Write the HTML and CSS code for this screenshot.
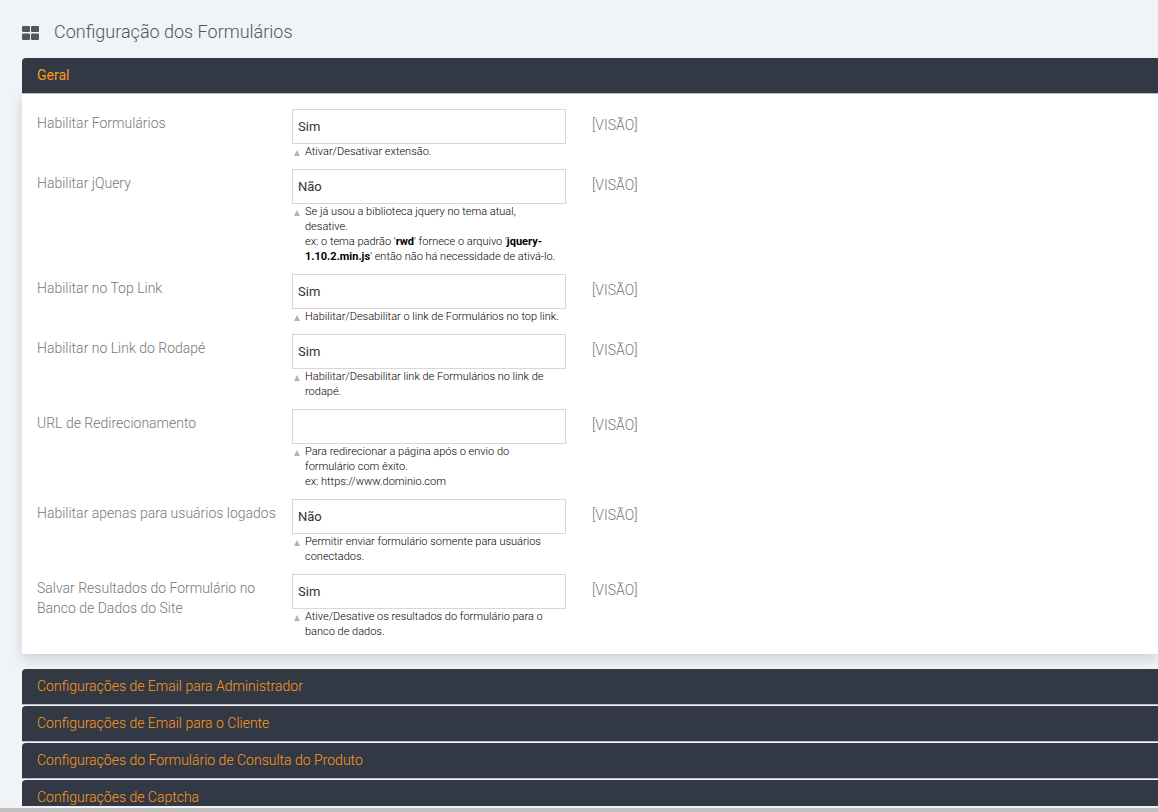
FILE: index.html
```
<!DOCTYPE html>
<html lang="pt-BR">
<head>
    <meta charset="UTF-8">
    <meta name="viewport" content="width=device-width, initial-scale=1.0">
    <title>Configuração dos Formulários</title>
    <link rel="stylesheet" href="styles.css">
</head>
<body>
    <main class="content">
        <header class="content-header">
            <svg class="header-icon" width="18" height="16" viewBox="0 0 18 16" aria-hidden="true">
                <rect x="0" y="2" width="8" height="6" rx="1"/>
                <rect x="9" y="2" width="8" height="6" rx="1"/>
                <rect x="0" y="9.5" width="8" height="6.5" rx="1"/>
                <rect x="9" y="9.5" width="8" height="6.5" rx="1"/>
            </svg>
            <h1>Configuração dos Formulários</h1>
        </header>

        <section class="section open">
            <h2><a class="section-head" href="#geral">Geral</a></h2>
            <form class="section-body" id="geral">
                <div class="row">
                    <label for="enabled">Habilitar Formulários</label>
                    <div class="value">
                        <select id="enabled">
                            <option selected>Sim</option>
                            <option>Não</option>
                        </select>
                        <p class="note">Ativar/Desativar extensão.</p>
                    </div>
                    <span class="scope">[VISÃO]</span>
                </div>
                <div class="row">
                    <label for="jquery">Habilitar jQuery</label>
                    <div class="value">
                        <select id="jquery">
                            <option>Sim</option>
                            <option selected>Não</option>
                        </select>
                        <p class="note">Se já usou a biblioteca jquery no tema atual, desative.<br>ex: o tema padrão '<strong>rwd</strong>' fornece o arquivo '<strong>jquery-1.10.2.min.js</strong>' então não há necessidade de ativá-lo.</p>
                    </div>
                    <span class="scope">[VISÃO]</span>
                </div>
                <div class="row">
                    <label for="toplink">Habilitar no Top Link</label>
                    <div class="value">
                        <select id="toplink">
                            <option selected>Sim</option>
                            <option>Não</option>
                        </select>
                        <p class="note">Habilitar/Desabilitar o link de Formulários no top link.</p>
                    </div>
                    <span class="scope">[VISÃO]</span>
                </div>
                <div class="row">
                    <label for="footerlink">Habilitar no Link do Rodapé</label>
                    <div class="value">
                        <select id="footerlink">
                            <option selected>Sim</option>
                            <option>Não</option>
                        </select>
                        <p class="note">Habilitar/Desabilitar link de Formulários no link de rodapé.</p>
                    </div>
                    <span class="scope">[VISÃO]</span>
                </div>
                <div class="row">
                    <label for="redirect">URL de Redirecionamento</label>
                    <div class="value">
                        <input type="text" id="redirect">
                        <p class="note">Para redirecionar a página após o envio do formulário com êxito.<br>ex: https://www.dominio.com</p>
                    </div>
                    <span class="scope">[VISÃO]</span>
                </div>
                <div class="row">
                    <label for="logged">Habilitar apenas para usuários logados</label>
                    <div class="value">
                        <select id="logged">
                            <option>Sim</option>
                            <option selected>Não</option>
                        </select>
                        <p class="note">Permitir enviar formulário somente para usuários conectados.</p>
                    </div>
                    <span class="scope">[VISÃO]</span>
                </div>
                <div class="row">
                    <label for="save">Salvar Resultados do Formulário no Banco de Dados do Site</label>
                    <div class="value">
                        <select id="save">
                            <option selected>Sim</option>
                            <option>Não</option>
                        </select>
                        <p class="note">Ative/Desative os resultados do formulário para o banco de dados.</p>
                    </div>
                    <span class="scope">[VISÃO]</span>
                </div>
            </form>
        </section>

        <section class="section">
            <h2><a class="section-head" href="#admin">Configurações de Email para Administrador</a></h2>
        </section>
        <section class="section">
            <h2><a class="section-head" href="#cliente">Configurações de Email para o Cliente</a></h2>
        </section>
        <section class="section">
            <h2><a class="section-head" href="#consulta">Configurações do Formulário de Consulta do Produto</a></h2>
        </section>
        <section class="section">
            <h2><a class="section-head" href="#captcha">Configurações de Captcha</a></h2>
        </section>
    </main>
    <div class="scroll-track"></div>
</body>
</html>
```
FILE: styles.css
```
* {
    margin: 0;
    padding: 0;
    box-sizing: border-box;
}

body {
    display: flex;
    flex-direction: column;
    height: 100vh;
    background-color: #f0f3f8;
    color: #000;
    font-family: Roboto, "Liberation Sans", sans-serif;
    font-size: 14px;
    font-weight: 300;
    line-height: 20px;
}

.content {
    flex: 1;
    min-height: 0;
    overflow: hidden;
    padding: 20px 0 0 22px;
}

.content-header {
    display: flex;
    align-items: center;
    gap: 14px;
    margin-bottom: 14px;
}

.header-icon {
    fill: #555;
}

h1 {
    color: #555;
    font-size: 18px;
    font-weight: 300;
    line-height: 24px;
}

h2 {
    position: relative;
    font-size: 14px;
    font-weight: 300;
}

.section {
    margin-bottom: 1px;
}

.section.open {
    margin-bottom: 15px;
}

.section.open h2 {
    font-weight: 400;
}

.section-head {
    display: block;
    height: 36px;
    padding: 7px 15px;
    background-color: #323844;
    background-clip: padding-box;
    border-bottom: 1px solid #bbbec4;
    border-top-left-radius: 4px;
    color: #ff9a1a;
    text-decoration: none;
}

.section-body {
    display: flex;
    flex-direction: column;
    gap: 10px;
    padding: 15px;
    background-color: #fff;
    box-shadow: 0 5px 12px rgba(0, 0, 0, 0.15);
}

.row {
    display: grid;
    grid-template-columns: 240px 274px 1fr;
    column-gap: 15px;
}

.row label {
    padding-top: 4px;
    color: #777;
}

.scope {
    padding: 6px 0 0 11px;
    color: #777;
}

select,
input {
    display: block;
    width: 100%;
    height: 35px;
    padding: 0 5px;
    appearance: none;
    background-color: #fff;
    border: 1px solid #d6d6db;
    border-radius: 0;
    color: #333;
    font-family: inherit;
    font-size: 13px;
    font-weight: 400;
}

.note {
    position: relative;
    padding: 0 5px 0 13px;
    font-size: 11px;
    line-height: 15px;
}

.note strong {
    font-weight: 700;
}

/* little arrow pointing at the field */
.note::before {
    content: "";
    position: absolute;
    top: 6px;
    left: 2px;
    border: solid transparent;
    border-width: 0 3px 6px;
    border-bottom-color: #a9b7bd;
}

.scroll-track {
    height: 6px;
    background-color: #c1c1c1;
    border-top: 2px solid #f1f1f1;
}
```
